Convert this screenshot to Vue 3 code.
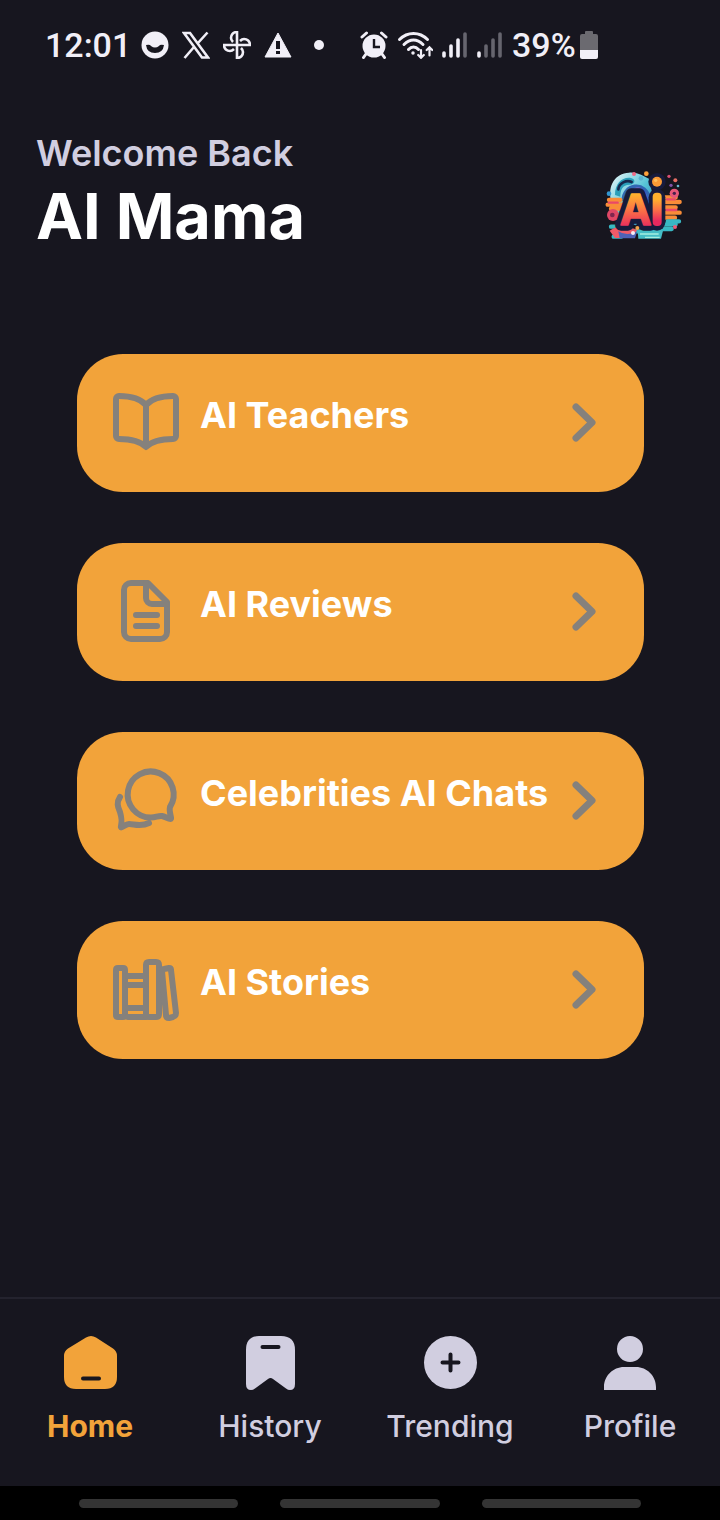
<template>
  <div class="screen">
    <div class="status-bar">
      <div class="status-left">
        <span class="clock">12:01</span>
        <svg class="status-icon" viewBox="0 0 28 28">
          <circle cx="14" cy="14" r="13.5" fill="currentColor" />
          <path d="M5 14q4-1 5 1q4 3 8 0q1-2 5-1q-1 8-9 8t-9-8z" fill="#17161f" />
        </svg>
        <svg class="status-icon line" viewBox="0 0 28 28" stroke-width="2.6">
          <path d="M2 2h6l18 24.5h-6zM25.5 1.5L15.5 12.5M12 16L2.5 27" />
        </svg>
        <svg class="status-icon line" viewBox="0 0 28 28" stroke-width="2.6">
          <path
            v-for="angle in [0, 90, 180, 270]"
            :key="angle"
            :transform="`rotate(${angle} 14 14)`"
            d="M14 14V1c-4 0-6 3-6 6c0 2 1 3 2 4"
          />
        </svg>
        <svg class="status-icon" viewBox="0 0 28 28">
          <path d="M14 2L27 26H1z" fill="currentColor" stroke="currentColor" stroke-linejoin="round" />
          <path d="M12 10h4v8h-4zM12 20h4v3h-4z" fill="#17161f" />
        </svg>
        <svg class="status-icon" viewBox="0 0 28 28">
          <circle cx="14" cy="14" r="5" fill="currentColor" />
        </svg>
      </div>
      <div class="status-right">
        <svg class="status-icon" viewBox="0 0 28 28">
          <circle cx="14" cy="15" r="11.5" fill="currentColor" />
          <path d="M2 6l4.5-4M26 6l-4.5-4M6 23l-2.5 3.5M22 23l2.5 3.5" stroke="currentColor" stroke-width="3" stroke-linecap="round" />
          <path d="M14 8v8h6" fill="none" stroke="#17161f" stroke-width="2.4" />
        </svg>
        <svg class="wifi-icon line" viewBox="0 0 36 28" stroke-width="3" stroke-linecap="round">
          <path d="M2.500 8.500c8-8 20-8 28 0M7 13.500c6-6 13-6 19 0M11.500 18.500c3-3.500 7-3.500 10 0" />
          <circle cx="16" cy="22" r="1" fill="currentColor" stroke-width="1.5" />
          <path d="M24 19v7.500M21.200 24l2.800 2.800l2.800-2.800M32.500 24.500v-8M29.700 19l2.800-2.800l2.800 2.800" stroke-width="2.2" />
        </svg>
        <svg
          v-for="(bars, index) in signals"
          :key="index"
          class="signal-icon line"
          viewBox="0 0 26 28"
          stroke-width="3.6"
          stroke-linecap="round"
        >
          <path
            v-for="bar in 4"
            :key="bar"
            :d="`M${bar * 7 - 5} 25V${[22, 15, 9, 3][bar - 1]}`"
            :class="{ dim: bar > bars }"
          />
        </svg>
        <span class="battery">
          39%
          <svg class="battery-icon" viewBox="0 0 18 28">
            <path d="M5 3V1q0-1 1-1h6q1 0 1 1v2h3q2 0 2 2v15H0V5q0-2 2-2z" fill="#6b6a70" />
            <path d="M0 19h18v7q0 2-2 2H2q-2 0-2-2z" fill="currentColor" />
          </svg>
        </span>
      </div>
    </div>

    <header class="header">
      <div>
        <p class="greeting">Welcome Back</p>
        <h1 class="name">AI Mama</h1>
      </div>
      <svg class="logo" viewBox="30 30 234 210" role="img" aria-label="AI">
        <defs>
          <linearGradient id="letters" x1="0" y1="0" x2="0" y2="1">
            <stop offset="0.2" stop-color="#ffb02e" />
            <stop offset="0.5" stop-color="#fb7345" />
            <stop offset="0.85" stop-color="#e8285f" />
          </linearGradient>
          <linearGradient id="swirl" x1="0" y1="0" x2="1" y2="1">
            <stop offset="0" stop-color="#eefafb" />
            <stop offset="0.5" stop-color="#54c3d6" />
            <stop offset="1" stop-color="#2868ad" />
          </linearGradient>
        </defs>
        <path d="M48 122C38 76 60 40 102 38c30-2 42 12 60 18l20 90-60 50-70-20z" fill="url(#swirl)" />
        <path d="M60 105C60 70 82 50 108 54c16 4 12 20-4 20-22 0-28 16-28 36z" fill="#2b9fba" />
        <path d="M70 88c2-18 24-30 40-22" fill="none" stroke="#16284d" stroke-width="8" stroke-linecap="round" />
        <path d="M88 122c-4-42 62-66 76 2" fill="none" stroke="#3267b3" stroke-width="16" />
        <path d="M110 96c18-20 40-10 46 24" fill="none" stroke="#7567c9" stroke-width="7" />
        <path d="M42 120h34M38 134h46M48 146h32M208 112h34M210 126h44M208 142h34M208 158h46M210 173h30" stroke="#f98d38" stroke-width="13" stroke-linecap="round" />
        <path d="M42 128h26M216 118h24M214 150h30" stroke="#e94868" stroke-width="7" stroke-linecap="round" />
        <path d="M48 200h54M58 214h80M190 193h52M200 207h30M56 230h22M218 184h34" stroke="#38b8c4" stroke-width="13" stroke-linecap="round" />
        <path d="M44 212q36-24 82-2l-14 24H60z" fill="#ef5b68" />
        <path d="M70 214q24 16 56 1l-6 20H74z" fill="#4e62b6" />
        <path d="M128 212q35-18 76 0l-6 24h-68z" fill="#45bdc6" />
        <path d="M135 222h56M150 232h44" stroke="#a4eee0" stroke-width="4" />
        <circle cx="54" cy="165" r="18" fill="#df4766" />
        <circle cx="52" cy="165" r="7" fill="#7f264f" />
        <circle cx="238" cy="100" r="14" fill="#e85879" />
        <circle cx="238" cy="100" r="5" fill="#49214c" />
        <circle cx="42" cy="101" r="7" fill="#3296d1" />
        <circle cx="154" cy="41" r="7" fill="#ffa23a" />
        <circle cx="117" cy="42" r="6" fill="#f06a85" />
        <circle cx="138" cy="55" r="7" fill="#5bb4d0" />
        <circle cx="222" cy="49" r="5" fill="#d94f74" />
        <circle cx="241" cy="61" r="6" fill="#e66d64" />
        <circle cx="228" cy="76" r="5" fill="#8351a6" />
        <circle cx="249" cy="78" r="4" fill="#67b9cf" />
        <circle cx="240" cy="201" r="6" fill="#ed5c77" />
        <circle cx="186" cy="65" r="26" fill="#171b3c" />
        <text x="74" y="196" class="logo-text" stroke="#171b3c" stroke-width="34">A</text>
        <path d="M186 112v75" stroke="#171b3c" stroke-width="50" stroke-linecap="round" />
        <text x="74" y="196" class="logo-text" fill="url(#letters)" stroke="url(#letters)" stroke-width="4">A</text>
        <rect x="173" y="98" width="27" height="100" rx="12" fill="url(#letters)" />
        <circle cx="186" cy="65" r="15" fill="#fb9a35" />
        <circle cx="182" cy="61" r="5" fill="#ffc05c" />
        <circle cx="114" cy="219" r="6" fill="#f7edf5" />
        <circle cx="127" cy="204" r="6" fill="#f5a34c" />
      </svg>
    </header>

    <main class="menu">
      <button v-for="item in items" :key="item.title" type="button" class="card">
        <svg class="card-icon line" viewBox="0 0 80 80">
          <path v-for="path in item.paths" :key="path" :d="path" />
        </svg>
        <span class="card-title">{{ item.title }}</span>
        <svg class="chevron line" viewBox="0 0 24 40">
          <path d="M4 4l16 15.500L4 35" />
        </svg>
      </button>
    </main>

    <nav class="tabs">
      <a
        v-for="tab in tabs"
        :key="tab.label"
        href="#"
        class="tab"
        :class="{ active: tab.label === activeTab }"
        @click.prevent="activeTab = tab.label"
      >
        <svg class="tab-icon" viewBox="0 0 54 54">
          <path :d="tab.shape" fill="currentColor" />
          <path v-if="tab.mark" :d="tab.mark" class="tab-mark" />
        </svg>
        <span>{{ tab.label }}</span>
      </a>
    </nav>

    <div class="system-nav">
      <span v-for="pill in 3" :key="pill" class="pill"></span>
    </div>
  </div>
</template>

<script setup>
import { ref } from 'vue';

const activeTab = ref('Home');

// lit bars of each SIM
const signals = [3, 1];

const items = [
  {
    title: 'AI Teachers',
    paths: [
      'M40 22C34 15 24 13 13 13a3 3 0 0 0-3 3v37a3 3 0 0 0 3 3C24 56 34 58 40 64C46 58 56 56 67 56a3 3 0 0 0 3-3V16a3 3 0 0 0-3-3C56 13 46 15 40 22zV62',
    ],
  },
  {
    title: 'AI Reviews',
    paths: [
      'M42 11H25a7 7 0 0 0-7 7v42a7 7 0 0 0 7 7h29a7 7 0 0 0 7-7V30z',
      'M40 11v15a6 6 0 0 0 6 6h14',
      'M30 43h21M30 54h21',
    ],
  },
  {
    title: 'Celebrities AI Chats',
    paths: [
      'M64 46a23 23 0 1 0-19 10.500c5 0 7-2 11-1.500c3 .5 6 3 8.500 3c2 0-2-7-.5-12z',
      'M14 36c-4 6-2 10 0 15c2 7 2 9 1 14c-1 4 4-2 8-2c5 0 12 3 20-1',
    ],
  },
  {
    title: 'AI Stories',
    paths: [
      'M12 18h5q2 0 2 2v45q0 2-2 2h-5q-2 0-2-2V20q0-2 2-2z',
      'M22 26h18M22 35h18M22 58h18M22 67h18',
      'M43 12h7q3 0 3 3v49q0 3-3 3h-7q-3 0-3-3V15q0-3 3-3z',
      'M56 21q0-2 2-2l5-1q2 0 2 2l5 43q0 3-3 4l-4 1q-3 0-3-3z',
    ],
  },
];

const tabs = [
  {
    label: 'Home',
    shape: 'M23 1.500Q28 -1.500 33 1.500L50 12.500Q54 15 54 20V41Q54 53 42 53H13Q1 53 1 41V20Q1 15 5 12.500z',
    mark: 'M20 42.500h16',
  },
  {
    label: 'History',
    shape: 'M16 0H38Q52 0 52 14V48Q52 54 47 54Q45 54 43 52.500L30 43Q27.500 41 25 43L12 52.500Q10 54 8 54Q3 54 3 48V14Q3 0 16 0z',
    mark: 'M19.500 11h16',
  },
  {
    label: 'Trending',
    shape: 'M27.500 0a26.500 26.500 0 1 1 0 53a26.500 26.500 0 1 1 0-53z',
    mark: 'M19.500 26.500h16M27.500 18.500v16',
  },
  {
    label: 'Profile',
    shape: 'M27 0a13 13 0 1 1 0 26a13 13 0 1 1 0-26zM1 54v-3C1 40 10 31 21 31h12C44 31 53 40 53 51v3z',
  },
];
</script>

<style>
body {
  margin: 0;
  background: #17161f;
}
</style>

<style scoped>
.screen {
  display: flex;
  flex-direction: column;
  min-height: 100vh;
  background: #17161f;
  color: #fff;
  font-family: Inter, "Open Sans", sans-serif;
}

svg {
  display: block;
  flex-shrink: 0;
}

.line {
  fill: none;
  stroke: currentColor;
}

.status-bar {
  display: flex;
  align-items: center;
  gap: 27px;
  height: 90px;
  padding: 0 45px;
  color: #f1eff7;
  font-family: Roboto, sans-serif;
  font-size: 34px;
  font-weight: 500;
}

.status-left,
.status-right {
  display: flex;
  align-items: center;
}

.status-left {
  gap: 13px;
}

.status-right {
  gap: 9px;
}

.clock {
  width: 83px;
}

.status-icon {
  width: 28px;
  height: 28px;
}

.wifi-icon {
  width: 36px;
  height: 28px;
}

.signal-icon {
  width: 26px;
  height: 28px;
}

.dim {
  stroke: #66656e;
}

.battery {
  display: flex;
  align-items: center;
  gap: 4px;
}

.battery-icon {
  width: 18px;
  height: 28px;
}

.header {
  display: flex;
  align-items: center;
  justify-content: space-between;
  padding: 39px 37px 0 36px;
}

.greeting {
  margin: 0;
  color: #d1cee0;
  font-size: 36px;
  font-weight: 600;
  line-height: 48px;
}

.name {
  margin: 0;
  font-size: 63px;
  font-weight: 700;
  line-height: 79px;
}

.logo {
  width: 78px;
  height: 70px;
  margin-top: 24px;
}

.logo-text {
  font-size: 128px;
  font-weight: 700;
  stroke-linejoin: round;
}

.menu {
  display: flex;
  flex-direction: column;
  gap: 51px;
  padding: 98px 76px 51px 77px;
}

.card {
  display: flex;
  align-items: center;
  min-height: 138px;
  padding: 0 48px 0 29px;
  border: none;
  border-radius: 46px;
  background: #f2a33a;
  color: #85817c;
  font-family: inherit;
  text-align: left;
  cursor: pointer;
}

.card-icon {
  width: 80px;
  height: 80px;
  stroke-width: 6;
  stroke-linecap: round;
  stroke-linejoin: round;
}

.card-title {
  flex: 1;
  padding: 0 0 16px 14px;
  color: #fff;
  font-size: 36px;
  font-weight: 700;
  line-height: 44px;
  white-space: nowrap;
}

.chevron {
  width: 24px;
  height: 40px;
  stroke-width: 7;
  stroke-linecap: round;
  stroke-linejoin: round;
}

.tabs {
  display: flex;
  margin-top: auto;
  padding: 37px 0 40px;
  border-top: 2px solid #24232e;
}

.tab {
  display: flex;
  flex: 1;
  flex-direction: column;
  align-items: center;
  gap: 16px;
  color: #d1cee0;
  font-size: 30px;
  font-weight: 500;
  line-height: 40px;
  text-decoration: none;
}

.tab.active {
  color: #f2a33a;
  font-weight: 700;
}

.tab-icon {
  width: 54px;
  height: 54px;
}

.tab-mark {
  fill: none;
  stroke: #17161f;
  stroke-width: 4;
  stroke-linecap: round;
}

.system-nav {
  display: flex;
  gap: 42px;
  align-items: center;
  height: 34px;
  padding: 0 79px;
  background: #000;
}

.pill {
  flex: 1;
  height: 9px;
  border-radius: 5px;
  background: #343434;
}
</style>
